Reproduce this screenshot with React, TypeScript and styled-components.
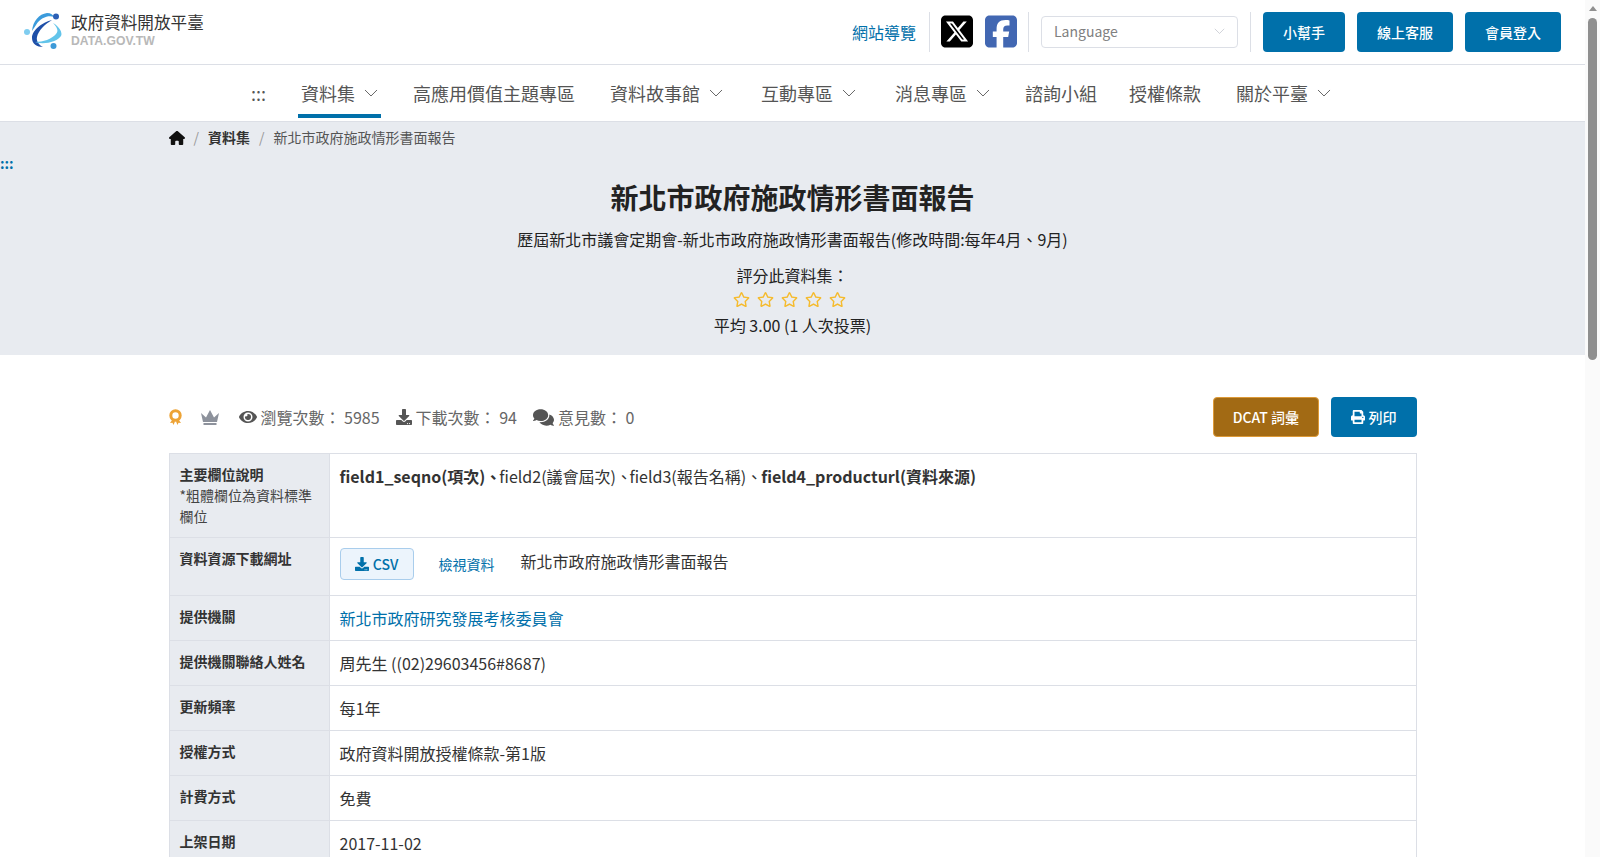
import React from 'react'
import styled, { createGlobalStyle } from 'styled-components'
import { FaEye, FaDownload, FaComments, FaPrint, FaRegStar } from 'react-icons/fa'
import { FaHouse, FaSquareXTwitter, FaSquareFacebook } from 'react-icons/fa6'

const BLUE = '#0070aa'
const LINE = '#dcdfe6'
const PANEL = '#e8ebf0'

const GlobalStyle = createGlobalStyle`
  html, body { margin: 0; padding: 0; background: #fff; }
  body {
    font-family: "Noto Sans CJK TC", "Noto Sans", sans-serif;
    color: #333;
    font-size: 16px;
    line-height: 1.5;
  }
  * { box-sizing: border-box; }
  a { text-decoration: none; }
`

const Shell = styled.div`
  display: flex;
  height: 100vh;
  overflow: hidden;
`

const Page = styled.div`
  flex: 1;
  min-width: 0;
  overflow: hidden;
`

const ScrollRail = styled.div`
  width: 15px;
  flex-shrink: 0;
  display: flex;
  flex-direction: column;
  align-items: center;
  padding-top: 6px;
  background: #fafafa;
`

const ScrollArrow = styled.span`
  border-left: 4.5px solid transparent;
  border-right: 4.5px solid transparent;
  border-bottom: 5px solid #8f8f8f;
`

const ScrollThumb = styled.span`
  width: 9px;
  height: 342px;
  margin-top: 7px;
  border-radius: 5px;
  background: #8f8f8f;
`

const TopBar = styled.header`
  height: 65px;
  display: flex;
  align-items: center;
  justify-content: space-between;
  padding: 0 24px 1px 23px;
  border-bottom: 1px solid ${LINE};
`

const Brand = styled.a`
  display: flex;
  align-items: center;
  gap: 6px;
`

const BrandText = styled.div`
  display: flex;
  flex-direction: column;
  gap: 3px;
  margin-top: -4px;
`

const BrandName = styled.span`
  font-size: 16.6px;
  line-height: 20px;
  font-weight: 400;
  color: #333;
  white-space: nowrap;
`

const BrandSub = styled.span`
  font-family: "Liberation Sans", sans-serif;
  font-size: 12.2px;
  line-height: 13px;
  font-weight: 700;
  color: #b8b8b8;
`

const TopTools = styled.div`
  display: flex;
  align-items: center;
`

const SiteMap = styled.a`
  font-size: 16px;
  color: ${BLUE};
  margin-right: 13px;
`

const ToolDivider = styled.span`
  width: 1px;
  height: 40px;
  background: ${LINE};
`

const SocialGroup = styled.div`
  display: flex;
  align-items: center;
  gap: 12px;
  padding: 0 11px 0 11px;
  height: 32px;
`

const SocialLink = styled.a<{ $color: string }>`
  display: flex;
  color: ${p => p.$color};
  font-size: 37px;
  width: 32px;
  height: 32px;
  align-items: center;
  justify-content: center;
`

const LanguageBox = styled.div`
  width: 197px;
  height: 32px;
  margin: 0 12px 0 12px;
  padding: 0 12px;
  display: flex;
  align-items: center;
  justify-content: space-between;
  border: 1px solid ${LINE};
  border-radius: 4px;
  font-size: 14px;
  color: #808080;
`

const HeaderButtons = styled.div`
  display: flex;
  gap: 12px;
  margin-left: 12px;
`

const PrimaryButton = styled.button`
  height: 40px;
  padding: 0 20px;
  display: inline-flex;
  align-items: center;
  gap: 4px;
  border: 0;
  border-radius: 4px;
  background: ${BLUE};
  color: #fff;
  font: 500 14px "Noto Sans CJK TC", "Noto Sans", sans-serif;
`

const NavBar = styled.nav`
  height: 57px;
  padding-right: 3px;
  display: flex;
  align-items: stretch;
  justify-content: center;
  gap: 29px;
  border-bottom: 1px solid ${LINE};
`

const NavItem = styled.a<{ $active?: boolean; $extra?: number }>`
  display: flex;
  align-items: center;
  gap: 9px;
  padding: 7px 3px 0;
  margin: 0 ${p => p.$extra ?? 0}px 3px 0;
  font-size: 18px;
  color: #555;
  white-space: nowrap;
  border-bottom: 4px solid ${p => (p.$active ? BLUE : 'transparent')};
`

const Hero = styled.section`
  height: 233px;
  background: ${PANEL};
  text-align: center;
`

const Crumbs = styled.ol`
  max-width: 1280px;
  margin: 0 auto;
  padding: 5px 16px 0;
  list-style: none;
  display: flex;
  align-items: center;
  font-size: 14px;
  line-height: 21px;
  color: #555;
`

const Crumb = styled.li<{ $strong?: boolean }>`
  display: flex;
  align-items: center;
  font-weight: ${p => (p.$strong ? 700 : 400)};
  color: ${p => (p.$strong ? '#333' : '#555')};
  svg { font-size: 16px; color: #111; }
  &:not(:first-child)::before {
    content: '/';
    margin: 0 9px;
    color: #999;
    font-weight: 400;
  }
`

const SkipMark = styled.a`
  display: block;
  margin-top: 7px;
  height: 16px;
  line-height: 16px;
  text-align: left;
  font-size: 14px;
  font-weight: 700;
  color: ${BLUE};
`

const HeroTitle = styled.h1`
  margin: 5px 0 0;
  font-size: 28px;
  line-height: 42px;
  font-weight: 700;
  color: #222;
`

const HeroText = styled.p<{ $gap?: number }>`
  margin: ${p => p.$gap ?? 0}px 0 0;
  font-size: 16px;
  line-height: 24px;
  color: #222;
`

const Stars = styled.div`
  display: flex;
  justify-content: center;
  gap: 7px;
  height: 24px;
  padding-right: 6px;
  align-items: center;
  color: #f5bb2e;
  font-size: 17px;
`

const Content = styled.main`
  max-width: 1280px;
  margin: 0 auto;
  padding: 42px 16px 0;
`

const StatsRow = styled.div`
  height: 40px;
  display: flex;
  align-items: center;
  justify-content: space-between;
  margin-bottom: 16px;
`

const StatList = styled.div`
  display: flex;
  align-items: center;
  font-size: 16px;
  color: #666;
`

const BadgeSlot = styled.span<{ $gap: number }>`
  display: flex;
  margin-right: ${p => p.$gap}px;
`

const Stat = styled.span`
  display: flex;
  align-items: center;
  gap: 4px;
  margin-right: 16px;
  svg { color: #555; }
`

const ActionGroup = styled.div`
  display: flex;
  gap: 12px;
`

const DcatButton = styled(PrimaryButton)`
  padding: 0 18.5px;
  background: #a26a14;
  border: 1px solid #dd9a38;
`

const InfoTable = styled.table`
  width: 100%;
  border-collapse: collapse;
  border: 1px solid ${LINE};
`

const LabelCell = styled.th`
  width: 160px;
  padding: 10px;
  background: ${PANEL};
  border: 1px solid ${LINE};
  text-align: left;
  vertical-align: top;
  font-size: 14px;
  line-height: 21px;
  font-weight: 700;
  color: #333;
`

const LabelNote = styled.div`
  font-weight: 400;
  color: #444;
`

const ValueCell = styled.td`
  padding: 10px;
  border: 1px solid ${LINE};
  vertical-align: top;
  font-size: 16px;
  line-height: 24px;
  color: #333;
`

const FieldName = styled.strong`
  font-weight: 700;
`

const FieldSep = styled.span<{ $tail: number }>`
  margin-right: ${p => p.$tail}px;
`

const ResourceLine = styled.div`
  display: flex;
  align-items: flex-start;
  min-height: 37px;
`

const CsvButton = styled.a`
  width: 74px;
  height: 32px;
  display: flex;
  align-items: center;
  justify-content: center;
  gap: 4px;
  border: 1px solid #a9cdec;
  border-radius: 4px;
  background: #ecf4fc;
  color: ${BLUE};
  font-size: 14px;
  font-weight: 500;
  svg { font-size: 14px; }
`

const ViewLink = styled.a`
  margin: 6px 0 0 25px;
  font-size: 14px;
  line-height: 21px;
  color: ${BLUE};
`

const ResourceName = styled.span`
  margin: 1px 0 0 26px;
`

const OrgLink = styled.a`
  color: ${BLUE};
`

// 圖片 logo 沒有檔案可用，用 svg 重畫
const Logo = () => (
  <svg width="42" height="40" viewBox="0 0 42 40">
    <path d="M9 19C10 9 16 2 24 1c4 0 6 2 7 4-5-2-13 0-18 8Z" fill="#3b9bdc" />
    <path d="M29 8C20 10 9 18 9 26c0 6 5 9 11 9-4-2-7-6-6-10C15 19 22 12 29 8Z" fill="#1f4fa8" />
    <path d="M12 30c9 3 22 0 26-6 2-3-2-10-8-13 4 4 6 8 3 11-4 5-13 8-21 8Z" fill="#62c4ea" />
    <circle cx="33" cy="4.500" r="3" fill="#2c5fb5" />
    <circle cx="4" cy="20" r="3" fill="#7fcdf0" />
    <circle cx="30.500" cy="34" r="3" fill="#3d9ad8" />
  </svg>
)

const Chevron = ({ width, color }: { width: number; color: string }) => (
  <svg width={width} height={width * 0.55} viewBox="0 0 14 7.700" fill="none" stroke={color} strokeWidth="1">
    <polyline points="1,1 7,7 13,1" />
  </svg>
)

const AwardIcon = () => (
  <svg width="13" height="16" viewBox="0 0 13 16" fill="#eda336">
    <path d="M3.500 10.500 1 14l2.500-.3L4.500 16 6 12.500ZM9.500 10.500 12 14l-2.500-.3L8.500 16 7 12.500Z" />
    <circle cx="6.500" cy="6.500" r="4.700" fill="none" stroke="#eda336" strokeWidth="3" />
  </svg>
)

const CrownIcon = () => (
  <svg width="18" height="15" viewBox="0 0 18 15" fill="#8d929c">
    <path d="M0 3 5 7.500 9 0l4 7.500L18 3l-2 9H2ZM2.500 13h13v2h-13Z" />
  </svg>
)

const navItems: { label: string; chevron?: boolean; active?: boolean; extra?: number }[] = [
  { label: ':::' },
  { label: '資料集', chevron: true, active: true },
  { label: '高應用價值主題專區' },
  { label: '資料故事館', chevron: true, extra: 3 },
  { label: '互動專區', chevron: true, extra: 4 },
  { label: '消息專區', chevron: true },
  { label: '諮詢小組', extra: -3 },
  { label: '授權條款' },
  { label: '關於平臺', chevron: true }
]

const simpleRows = [
  ['提供機關聯絡人姓名', '周先生 ((02)29603456#8687)'],
  ['更新頻率', '每1年'],
  ['授權方式', '政府資料開放授權條款-第1版'],
  ['計費方式', '免費'],
  ['上架日期', '2017-11-02']
]

export default function App() {
  return (
    <Shell>
      <GlobalStyle />
      <Page>
        <TopBar>
          <Brand href="#">
            <Logo />
            <BrandText>
              <BrandName>政府資料開放平臺</BrandName>
              <BrandSub>DATA.GOV.TW</BrandSub>
            </BrandText>
          </Brand>
          <TopTools>
            <SiteMap href="#">網站導覽</SiteMap>
            <ToolDivider />
            <SocialGroup>
              <SocialLink href="#" $color="#000"><FaSquareXTwitter /></SocialLink>
              <SocialLink href="#" $color="#4267b2"><FaSquareFacebook /></SocialLink>
            </SocialGroup>
            <ToolDivider />
            <LanguageBox>
              Language
              <Chevron width={11} color="#c4c7cf" />
            </LanguageBox>
            <ToolDivider />
            <HeaderButtons>
              <PrimaryButton>小幫手</PrimaryButton>
              <PrimaryButton>線上客服</PrimaryButton>
              <PrimaryButton>會員登入</PrimaryButton>
            </HeaderButtons>
          </TopTools>
        </TopBar>

        <NavBar>
          {navItems.map(item => (
            <NavItem href="#" key={item.label} $active={item.active} $extra={item.extra}>
              {item.label}
              {item.chevron && <Chevron width={14} color="#666" />}
            </NavItem>
          ))}
        </NavBar>

        <Hero>
          <Crumbs>
            <Crumb><FaHouse /></Crumb>
            <Crumb $strong>資料集</Crumb>
            <Crumb>新北市政府施政情形書面報告</Crumb>
          </Crumbs>
          <SkipMark href="#">:::</SkipMark>
          <HeroTitle>新北市政府施政情形書面報告</HeroTitle>
          <HeroText $gap={9}>歷屆新北市議會定期會-新北市政府施政情形書面報告(修改時間:每年4月、9月)</HeroText>
          <HeroText $gap={12}>評分此資料集：</HeroText>
          <Stars>
            <FaRegStar /><FaRegStar /><FaRegStar /><FaRegStar /><FaRegStar />
          </Stars>
          <HeroText $gap={2}>平均 3.00 (1 人次投票)</HeroText>
        </Hero>

        <Content>
          <StatsRow>
            <StatList>
              <BadgeSlot $gap={19}><AwardIcon /></BadgeSlot>
              <BadgeSlot $gap={20}><CrownIcon /></BadgeSlot>
              <Stat><FaEye size={18} />瀏覽次數： 5985</Stat>
              <Stat><FaDownload size={16} />下載次數： 94</Stat>
              <Stat><FaComments size={21} />意見數： 0</Stat>
            </StatList>
            <ActionGroup>
              <DcatButton>DCAT 詞彙</DcatButton>
              <PrimaryButton><FaPrint />列印</PrimaryButton>
            </ActionGroup>
          </StatsRow>

          <InfoTable>
            <tbody>
              <tr>
                <LabelCell>
                  主要欄位說明
                  <LabelNote>*粗體欄位為資料標準欄位</LabelNote>
                </LabelCell>
                <ValueCell>
                  <FieldName>field1_seqno(項次)<FieldSep $tail={-2}>、</FieldSep></FieldName>
                  field2(議會屆次)<FieldSep $tail={-2.5}>、</FieldSep>
                  field3(報告名稱)<FieldSep $tail={-1}>、</FieldSep>
                  <FieldName>field4_producturl(資料來源)</FieldName>
                </ValueCell>
              </tr>
              <tr>
                <LabelCell>資料資源下載網址</LabelCell>
                <ValueCell>
                  <ResourceLine>
                    <CsvButton href="#"><FaDownload />CSV</CsvButton>
                    <ViewLink href="#">檢視資料</ViewLink>
                    <ResourceName>新北市政府施政情形書面報告</ResourceName>
                  </ResourceLine>
                </ValueCell>
              </tr>
              <tr>
                <LabelCell>提供機關</LabelCell>
                <ValueCell><OrgLink href="#">新北市政府研究發展考核委員會</OrgLink></ValueCell>
              </tr>
              {simpleRows.map(([label, value]) => (
                <tr key={label}>
                  <LabelCell>{label}</LabelCell>
                  <ValueCell>{value}</ValueCell>
                </tr>
              ))}
            </tbody>
          </InfoTable>
        </Content>
      </Page>
      <ScrollRail>
        <ScrollArrow />
        <ScrollThumb />
      </ScrollRail>
    </Shell>
  )
}
